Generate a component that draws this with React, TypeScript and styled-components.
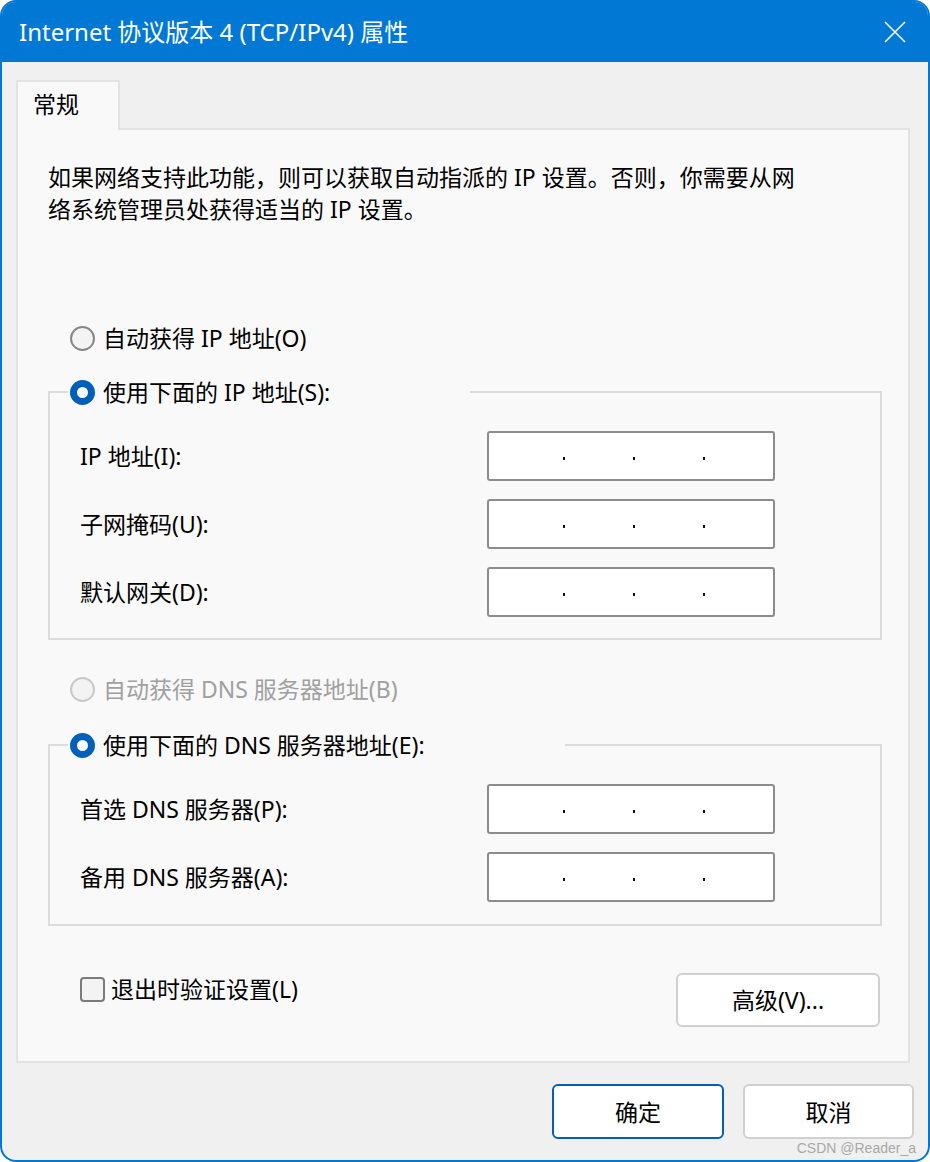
import React from "react";
import styled, { createGlobalStyle } from "styled-components";

const Blue = "#0078d4";
const Accent = "#005fb8";
const Font = `"Noto Sans", "Noto Sans CJK SC", sans-serif`;

const GlobalStyle = createGlobalStyle`
  html, body {
    margin: 0;
    padding: 0;
    background: #ffffff;
  }
  * {
    box-sizing: border-box;
  }
`;

const Window = styled.div`
  position: relative;
  width: 930px;
  height: 1162px;
  border: 2px solid ${Blue};
  border-radius: 16px;
  overflow: hidden;
  background: #f0f0f0;
  display: flex;
  flex-direction: column;
  font-family: ${Font};
  color: #000;
`;

const TitleBar = styled.div`
  height: 60px;
  flex-shrink: 0;
  background: ${Blue};
  display: flex;
  align-items: center;
  justify-content: space-between;
  padding: 0 22px 0 17px;
`;

const Title = styled.div`
  color: #fff;
  font-size: 24px;
  line-height: 30px;
`;

const CloseButton = styled.div`
  width: 22px;
  height: 22px;
  display: flex;
  align-items: center;
  justify-content: center;
`;

const Body = styled.div`
  flex: 1;
  display: flex;
  flex-direction: column;
  padding: 18px 18px 0 14px;
`;

const TabStrip = styled.div`
  display: flex;
`;

const Tab = styled.div`
  width: 104px;
  height: 50px;
  margin-bottom: -2px;
  position: relative;
  z-index: 1;
  background: #f9f9f9;
  border: 2px solid #e3e3e3;
  border-bottom: none;
  font-size: 23px;
  line-height: 30px;
  padding: 7px 0 0 15px;
`;

const Panel = styled.div`
  height: 935px;
  background: #f9f9f9;
  border: 2px solid #e3e3e3;
  display: flex;
  flex-direction: column;
  padding: 0 26px 0 30px;
`;

const Description = styled.p`
  margin: 31px 0 0;
  font-size: 23px;
  line-height: 32px;
`;

const OptionRow = styled.label<{ $top?: number; $disabled?: boolean }>`
  display: flex;
  align-items: center;
  height: 32px;
  line-height: 32px;
  margin-top: ${(p) => p.$top ?? 0}px;
  padding-left: 22px;
  font-size: 23px;
  color: ${(p) => (p.$disabled ? "#a0a0a0" : "#000")};
`;

const RadioDot = styled.span<{ $checked?: boolean; $disabled?: boolean }>`
  width: 25px;
  height: 25px;
  flex-shrink: 0;
  border-radius: 50%;
  margin-right: 8px;
  background: ${(p) => (p.$checked ? "#fff" : "#f3f3f3")};
  border: ${(p) =>
    p.$checked
      ? `7px solid ${Accent}`
      : `2px solid ${p.$disabled ? "#c8c8c8" : "#868686"}`};
`;

const Group = styled.fieldset<{ $top: number; $bottom: number }>`
  margin: ${(p) => p.$top}px 0 0;
  min-width: 0;
  border: 2px solid #dcdcdc;
  padding: 23px 0 ${(p) => p.$bottom}px 0;
  display: flex;
  flex-direction: column;
  gap: 18px;
`;

const Legend = styled.legend<{ $width: number }>`
  padding: 0;
  margin-left: 18px;
  width: ${(p) => p.$width}px;
`;

const LegendOption = styled(OptionRow)`
  padding-left: 2px;
`;

const FieldRow = styled.div`
  display: flex;
  align-items: center;
  padding-left: 30px;
`;

const FieldLabel = styled.span`
  width: 407px;
  font-size: 23px;
  line-height: 32px;
`;

const AddressBox = styled.div`
  width: 288px;
  height: 50px;
  background: #fff;
  border: 2px solid #8c8c8c;
  border-radius: 3px;
  display: flex;
  align-items: center;
  padding: 5px 0 0 74px;
  gap: 68px;
`;

const Dot = styled.span`
  width: 2px;
  height: 3px;
  background: #111;
`;

const BottomRow = styled.div`
  display: flex;
  justify-content: space-between;
  align-items: flex-start;
  margin-top: 47px;
  padding-right: 2px;
`;

const CheckRow = styled.label`
  display: flex;
  align-items: center;
  height: 32px;
  line-height: 32px;
  margin-left: 32px;
  font-size: 23px;
`;

const CheckBox = styled.span`
  width: 25px;
  height: 25px;
  border: 2px solid #7a7a7a;
  border-radius: 4px;
  background: #f3f3f3;
  margin-right: 6px;
  flex-shrink: 0;
`;

const Button = styled.button<{ $width: number; $height?: number; $primary?: boolean }>`
  width: ${(p) => p.$width}px;
  height: ${(p) => p.$height ?? 55}px;
  background: #fff;
  border: 2px solid ${(p) => (p.$primary ? Accent : "#d0d0d0")};
  border-radius: 6px;
  font-family: ${Font};
  font-size: 23px;
  line-height: 30px;
  color: #000;
  padding: 0;
`;

const Footer = styled.div`
  display: flex;
  justify-content: flex-end;
  gap: 19px;
  padding-top: 21px;
  margin-right: -4px;
`;

const Watermark = styled.div`
  position: absolute;
  right: 12px;
  bottom: 4px;
  font-family: "Liberation Sans", Arial, sans-serif;
  font-size: 14px;
  color: #a8a8a8;
`;

const AddressField = () => (
  <AddressBox>
    <Dot />
    <Dot />
    <Dot />
  </AddressBox>
);

const Field = ({ label }: { label: string }) => (
  <FieldRow>
    <FieldLabel>{label}</FieldLabel>
    <AddressField />
  </FieldRow>
);

export default function App() {
  return (
    <>
      <GlobalStyle />
      <Window>
        <TitleBar>
          <Title>Internet 协议版本 4 (TCP/IPv4) 属性</Title>
          <CloseButton>
            <svg width="22" height="22" viewBox="0 0 22 22">
              <path
                d="M1 1 L21 21 M21 1 L1 21"
                stroke="#fff"
                strokeWidth="1.6"
                fill="none"
              />
            </svg>
          </CloseButton>
        </TitleBar>
        <Body>
          <TabStrip>
            <Tab>常规</Tab>
          </TabStrip>
          <Panel>
            <Description>
              如果网络支持此功能，则可以获取自动指派的 IP 设置。否则，你需要从网
              <br />
              络系统管理员处获得适当的 IP 设置。
            </Description>

            <OptionRow $top={97}>
              <RadioDot />
              自动获得 IP 地址(O)
            </OptionRow>

            <Group $top={22} $bottom={21}>
              <Legend $width={402}>
                <LegendOption>
                  <RadioDot $checked />
                  使用下面的 IP 地址(S):
                </LegendOption>
              </Legend>
              <Field label="IP 地址(I):" />
              <Field label="子网掩码(U):" />
              <Field label="默认网关(D):" />
            </Group>

            <OptionRow $top={33} $disabled>
              <RadioDot $disabled />
              自动获得 DNS 服务器地址(B)
            </OptionRow>

            <Group $top={24} $bottom={22}>
              <Legend $width={497}>
                <LegendOption>
                  <RadioDot $checked />
                  使用下面的 DNS 服务器地址(E):
                </LegendOption>
              </Legend>
              <Field label="首选 DNS 服务器(P):" />
              <Field label="备用 DNS 服务器(A):" />
            </Group>

            <BottomRow>
              <CheckRow>
                <CheckBox />
                退出时验证设置(L)
              </CheckRow>
              <Button $width={204} $height={54}>
                高级(V)...
              </Button>
            </BottomRow>
          </Panel>
          <Footer>
            <Button $width={172} $primary>
              确定
            </Button>
            <Button $width={171}>取消</Button>
          </Footer>
        </Body>
        <Watermark>CSDN @Reader_a</Watermark>
      </Window>
    </>
  );
}
